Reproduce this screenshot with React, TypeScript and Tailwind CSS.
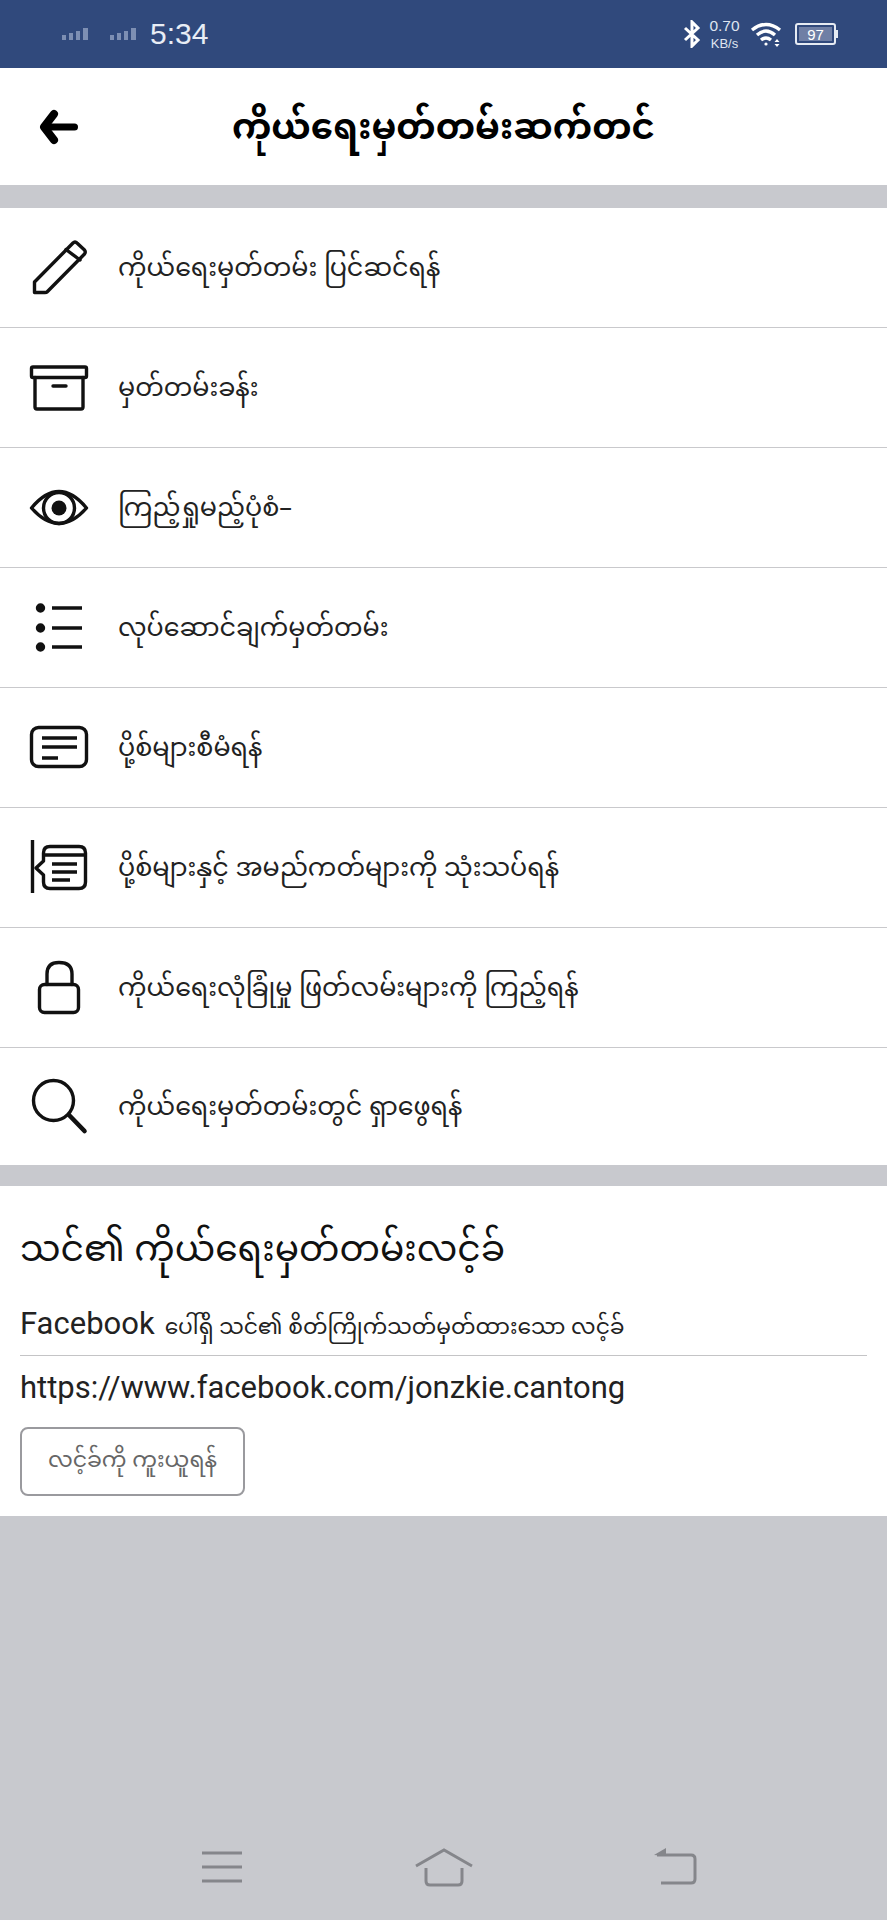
import type { ReactNode } from 'react';

const font = "font-['Noto_Sans_Myanmar','Noto_Sans','Liberation_Sans','DejaVu_Sans',sans-serif]";

function Icon({ children }: { children: ReactNode }) {
  return (
    <svg
      className="h-[64px] w-[64px] shrink-0"
      viewBox="0 0 64 64"
      fill="none"
      stroke="#111"
      strokeWidth="3.4"
      strokeLinecap="round"
      strokeLinejoin="round"
    >
      {children}
    </svg>
  );
}

const rows: { label: string; icon: ReactNode }[] = [
  {
    label: 'ကိုယ်ရေးမှတ်တမ်း ပြင်ဆင်ရန်',
    icon: (
      <Icon>
        <path d="M6.5 56.5 V46 L45 7 Q47 5 49 7 L56.5 14 Q58 16 56.5 18 L19 56 Q18.5 56.5 17 56.5 Z" />
        <path d="M38 13.5 L52 24" />
      </Icon>
    ),
  },
  {
    label: 'မှတ်တမ်းခန်း',
    icon: (
      <Icon>
        <rect x="3.5" y="11" width="55" height="10.5" rx="1.5" />
        <path d="M7 21.5 V51 Q7 53 9 53 H53 Q55 53 55 51 V21.5" />
        <path d="M25 30 H38" />
      </Icon>
    ),
  },
  {
    label: 'ကြည့်ရှုမည့်ပုံစံ–',
    icon: (
      <Icon>
        <path d="M3.5 32 Q17 15.5 31 15.5 Q45 15.5 58.5 32 Q45 47.5 31 47.5 Q17 47.5 3.5 32 Z" />
        <circle cx="31" cy="32" r="15.5" />
        <circle cx="31" cy="32" r="7.5" fill="#111" stroke="none" />
      </Icon>
    ),
  },
  {
    label: 'လုပ်ဆောင်ချက်မှတ်တမ်း',
    icon: (
      <Icon>
        <circle cx="12.5" cy="12" r="3" fill="#111" />
        <circle cx="12.5" cy="32" r="3" fill="#111" />
        <circle cx="12.5" cy="51" r="3" fill="#111" />
        <path d="M24 12 H54 M24 32 H54 M24 51 H54" strokeLinecap="butt" />
      </Icon>
    ),
  },
  {
    label: 'ပို့စ်များစီမံရန်',
    icon: (
      <Icon>
        <rect x="3.5" y="11.5" width="55" height="39" rx="7" />
        <path d="M14 22 H49 M14 31 H49 M14 42 H30" strokeLinecap="butt" />
      </Icon>
    ),
  },
  {
    label: 'ပို့စ်များနှင့် အမည်ကတ်များကို သုံးသပ်ရန်',
    icon: (
      <Icon>
        <path d="M4.5 4 V57" strokeLinecap="butt" />
        <path d="M8 32 L15.5 25 V17 Q15.5 10.5 22 10.5 H51 Q57.5 10.5 57.5 17 V46 Q57.5 52.5 51 52.5 H22 Q15.5 52.5 15.5 46 V39 Z" />
        <path d="M16 19 H57" />
        <path d="M24 28 H49 M24 36 H49 M24 44 H42" strokeLinecap="butt" />
      </Icon>
    ),
  },
  {
    label: 'ကိုယ်ရေးလုံခြုံမှု ဖြတ်လမ်းများကို ကြည့်ရန်',
    icon: (
      <Icon>
        <rect x="11.5" y="28.5" width="39" height="28" rx="5" />
        <path d="M19 28.5 V18 Q19 6.5 31 6.5 Q44 6.5 44 18 V28.5" />
      </Icon>
    ),
  },
  {
    label: 'ကိုယ်ရေးမှတ်တမ်းတွင် ရှာဖွေရန်',
    icon: (
      <Icon>
        <circle cx="25.5" cy="25.5" r="20" />
        <path d="M41 40 L56.5 56" strokeWidth="4.6" />
      </Icon>
    ),
  },
];

function StatusBar() {
  return (
    <div className="flex h-[68px] items-center justify-between bg-[#30497c] pr-[49px] pl-[61px] font-['Liberation_Sans',sans-serif] text-white">
      <div className="flex items-center">
        <svg className="h-[14px] w-[30px]" viewBox="0 0 30 14" fill="#7d8fb3">
          <rect x="1" y="8" width="4" height="5" />
          <rect x="8" y="6" width="4" height="7" />
          <rect x="15" y="4" width="4" height="9" />
          <rect x="22" y="1" width="5" height="12" />
        </svg>
        <svg className="ml-[18px] h-[14px] w-[30px]" viewBox="0 0 30 14" fill="#7d8fb3">
          <rect x="1" y="8" width="4" height="5" />
          <rect x="8" y="6" width="4" height="7" />
          <rect x="15" y="4" width="4" height="9" />
          <rect x="22" y="1" width="5" height="12" />
        </svg>
        <span className="ml-[11px] text-[30px] leading-none text-[#e8edf5]">5:34</span>
      </div>
      <div className="flex items-center">
        <svg className="h-[28px] w-[18px]" viewBox="0 0 18 28" fill="none" stroke="#fff" strokeWidth="3">
          <path d="M2 8 L15 20 L9 26 V2 L15 8 L2 20" />
        </svg>
        <div className="ml-[7px] flex w-[33px] flex-col items-center leading-none text-[#dfe5f0]">
          <span className="text-[15.5px]">0.70</span>
          <span className="mt-[4px] text-[13px]">KB/s</span>
        </div>
        <svg className="ml-[9px] h-[26px] w-[34px]" viewBox="0 0 34 26" fill="none" stroke="#fff" strokeWidth="3.4">
          <path d="M2 9 Q16 -2 30 9" />
          <path d="M7 14 Q16 6 25 14" />
          <path d="M11 19 Q16 15 21 19" />
          <circle cx="16" cy="23" r="1.6" fill="#fff" stroke="none" />
          <path d="M27 18 l2.5 3 h-5 Z M27 26 l2.5 -3 h-5 Z" fill="#fff" stroke="none" />
        </svg>
        <div className="ml-[11px] flex h-[22px] w-[41px] items-center rounded-[3px] border-2 border-[#e6ebf3] p-[2px]">
          <div className="flex h-full w-full items-center justify-center bg-[#6f7fa5] text-[15px] leading-none text-white">
            97
          </div>
        </div>
        <div className="h-[8px] w-[2px] bg-[#e6ebf3]" />
      </div>
    </div>
  );
}

function Row({ label, icon, last }: { label: string; icon: ReactNode; last: boolean }) {
  return (
    <div className={`flex items-center pl-[28px] ${last ? 'h-[117px]' : 'h-[120px] border-b border-[#c9c9cc]'}`}>
      {icon}
      <span className="mt-[7px] ml-[26px] text-[25.4px] leading-none text-[#222]">{label}</span>
    </div>
  );
}

export default function App() {
  return (
    <div className={`flex h-[1920px] w-[887px] flex-col overflow-hidden bg-[#c8c9ce] ${font}`}>
      <StatusBar />

      <div className="relative flex h-[117px] items-center justify-center bg-white">
        <svg className="absolute top-[41px] left-[38px] h-[36px] w-[42px]" viewBox="0 0 42 36" fill="none" stroke="#000" strokeWidth="8">
          <path d="M16 5 L6 18 L16 31" strokeLinejoin="round" strokeLinecap="round" />
          <path d="M8 18 H36.5" strokeLinecap="round" strokeWidth="7" />
        </svg>
        <h1 className="mt-[11px] text-[35.5px] leading-none font-bold text-black">ကိုယ်ရေးမှတ်တမ်းဆက်တင်</h1>
      </div>

      <div className="mt-[23px] bg-white">
        {rows.map((r, i) => (
          <Row key={r.label} label={r.label} icon={r.icon} last={i === rows.length - 1} />
        ))}
      </div>

      <div className="mt-[21px] flex h-[330px] flex-col bg-white px-[20px]">
        <h2 className="mt-[45px] text-[36px] leading-[44px] text-[#111]">သင်၏ ကိုယ်ရေးမှတ်တမ်းလင့်ခ်</h2>
        <p className="mt-[31px] flex items-baseline gap-[10px] font-['Roboto','Noto_Sans',sans-serif] text-[31px] leading-[36px] text-[#222]">
          Facebook
          <span className={`text-[21.8px] ${font}`}>ပေါ်ရှိ သင်၏ စိတ်ကြိုက်သတ်မှတ်ထားသော လင့်ခ်</span>
        </p>
        <div className="mt-[8px] h-px bg-[#c4c4c6]" />
        <p className="mt-[14px] font-['Roboto',sans-serif] text-[31px] leading-[36px] text-[#222]">
          https://www.facebook.com/jonzkie.cantong
        </p>
        <button className="mt-[21px] flex h-[69px] w-[225px] items-center justify-center rounded-[8px] border-[2.5px] border-[#9a9a9e] bg-white text-[22px] leading-none text-[#666]">
          လင့်ခ်ကို ကူးယူရန်
        </button>
      </div>

      <div className="flex flex-1 items-end justify-between pr-[190px] pb-[35px] pl-[200px]">
        <svg className="h-[36px] w-[44px]" viewBox="0 0 44 36" fill="none" stroke="#85868b" strokeWidth="3">
          <path d="M2 4 H42 M2 18 H42 M2 32 H42" />
        </svg>
        <svg className="mr-[9px] -mb-[3px] h-[40px] w-[60px]" viewBox="0 0 60 40" fill="none" stroke="#85868b" strokeWidth="3">
          <path d="M2 18 L30 2 L58 18" />
          <path d="M12 20 V33 Q12 37 16 37 H44 Q48 37 48 33 V20" />
        </svg>
        <svg className="-mb-px h-[38px] w-[44px]" viewBox="0 0 44 38" fill="none" stroke="#85868b" strokeWidth="3">
          <path d="M4 7 H38 Q42 7 42 11 V31 Q42 35 38 35 H8" />
          <path d="M1 7 L13 0 V8 Z" fill="#85868b" stroke="none" />
        </svg>
      </div>
    </div>
  );
}
